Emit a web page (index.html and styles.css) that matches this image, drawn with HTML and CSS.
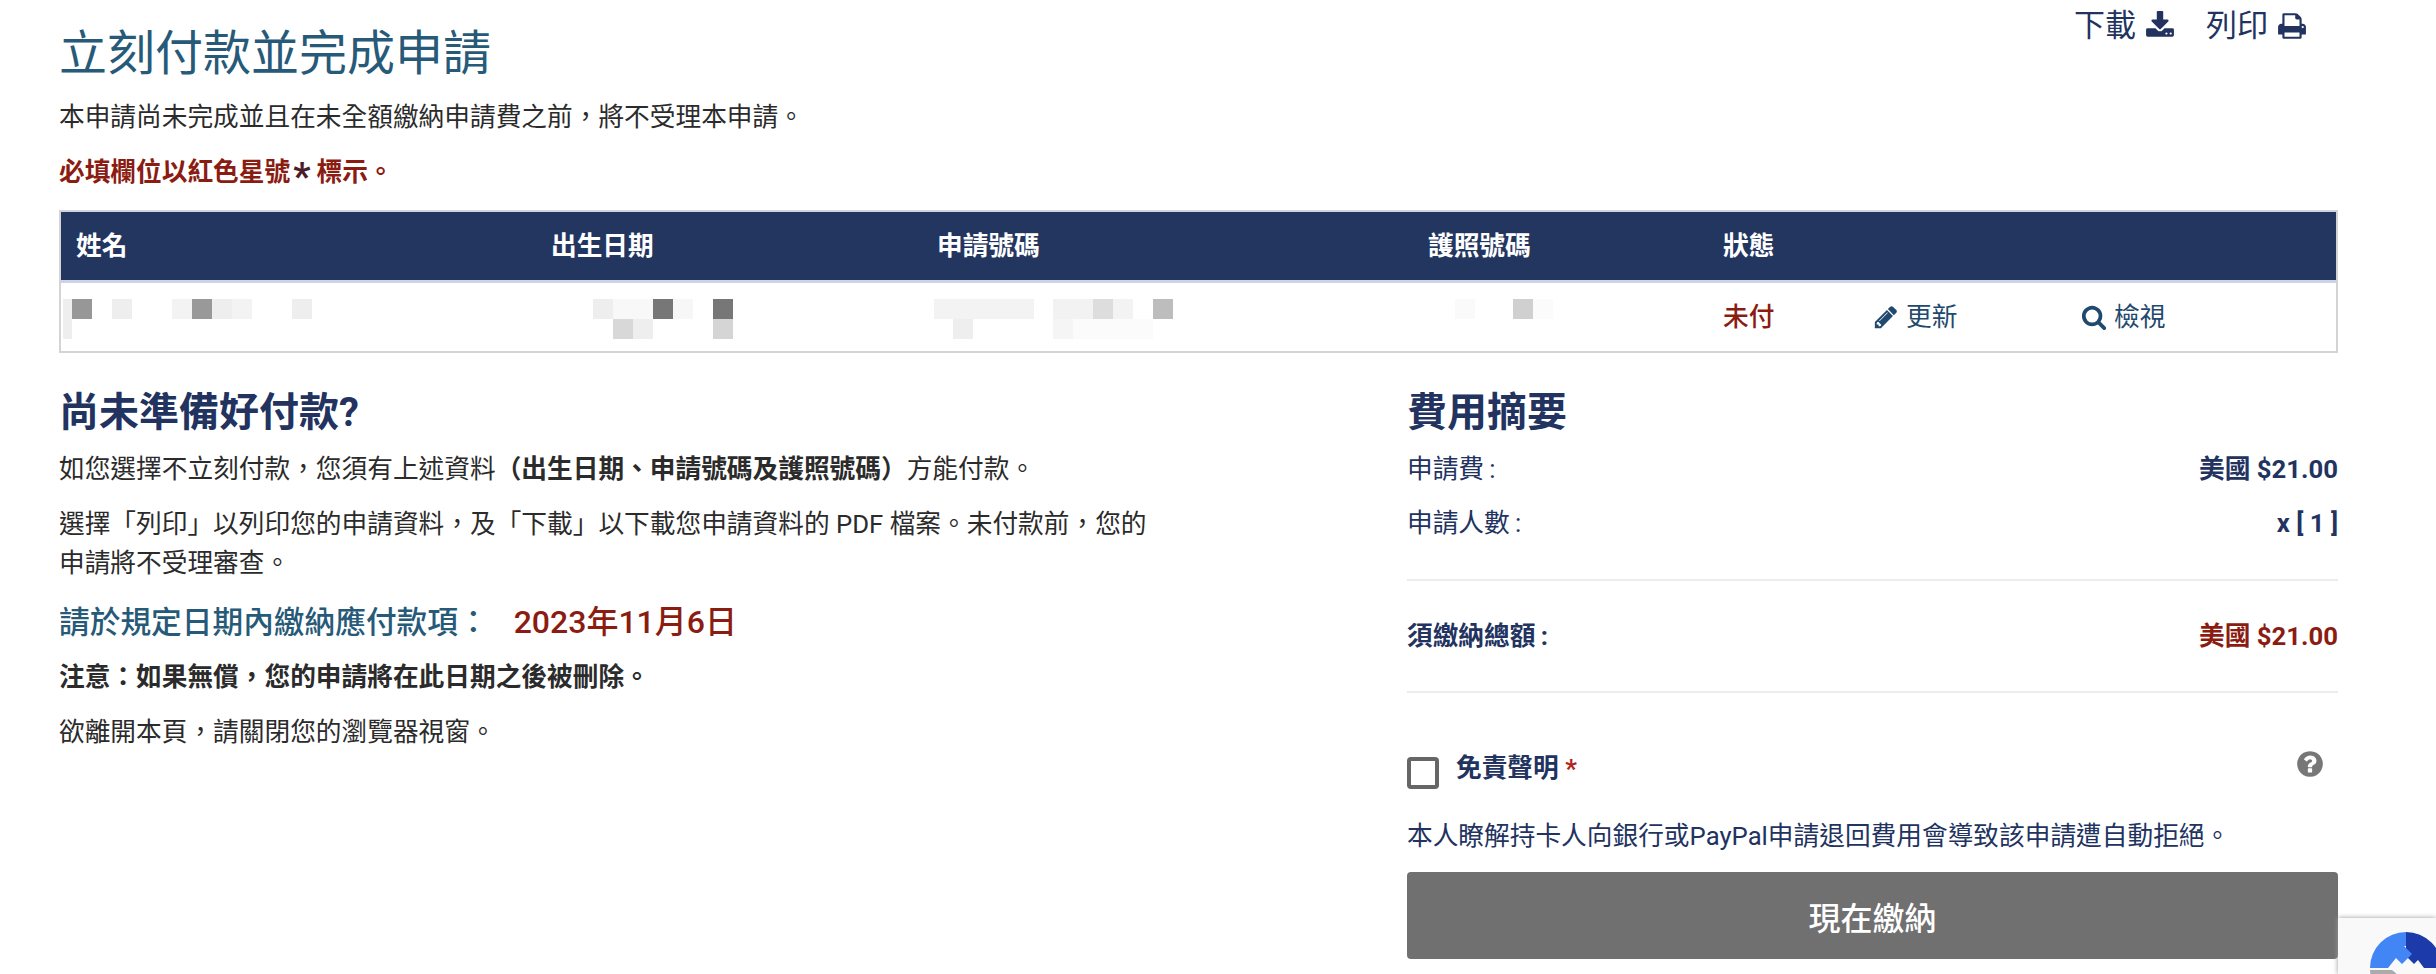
FILE: index.html
```html
<!DOCTYPE html>
<html lang="zh-Hant">
  <head>
    <meta charset="UTF-8" />
    <meta name="viewport" content="width=device-width, initial-scale=1.0" />
    <title>立刻付款並完成申請</title>
    <link rel="stylesheet" href="styles.css">
  </head>
  <body>
    <div class="page">
      <div class="top-row">
        <h1 class="page-title">立刻付款並完成申請</h1>
        <div class="top-actions">
          <a class="top-link">下載
            <svg class="top-icon" viewBox="0 0 1792 1792"><path d="M1344 1344q0-26-19-45t-45-19-45 19-19 45 19 45 45 19 45-19 19-45zm256 0q0-26-19-45t-45-19-45 19-19 45 19 45 45 19 45-19 19-45zm128-224v320q0 40-28 68t-68 28h-1472q-40 0-68-28t-28-68v-320q0-40 28-68t68-28h465l135 136q58 56 136 56t136-56l136-136h464q40 0 68 28t28 68zm-325-569q17 41-14 70l-448 448q-18 19-45 19t-45-19l-448-448q-31-29-14-70 17-39 59-39h256v-448q0-26 19-45t45-19h256q26 0 45 19t19 45v448h256q42 0 59 39z"/></svg>
          </a>
          <a class="top-link">列印
            <svg class="top-icon" viewBox="0 0 1792 1792"><path d="M448 1536h896v-256h-896v256zm0-640h896v-384h-160q-40 0-68-28t-28-68v-160h-640v640zm1152 64q0-26-19-45t-45-19-45 19-19 45 19 45 45 19 45-19 19-45zm128 0v416q0 13-9.5 22.5t-22.5 9.5h-224v160q0 40-28 68t-68 28h-960q-40 0-68-28t-28-68v-160h-224q-13 0-22.5-9.5t-9.5-22.5v-416q0-79 56.5-135.5t135.5-56.5h64v-544q0-40 28-68t68-28h672q40 0 88 20t76 48l152 152q28 28 48 76t20 88v256h64q79 0 135.5 56.5t56.5 135.5z"/></svg>
          </a>
        </div>
      </div>
      <p class="intro">本申請尚未完成並且在未全額繳納申請費之前&#xFF0C;將不受理本申請。</p>
      <p class="required-note">必填欄位以紅色星號<span class="note-star">*</span>標示。</p>

      <div class="app-table">
        <div class="app-row app-head">
          <div class="cell">姓名</div>
          <div class="cell">出生日期</div>
          <div class="cell">申請號碼</div>
          <div class="cell">護照號碼</div>
          <div class="cell">狀態</div>
          <div class="cell"></div>
          <div class="cell"></div>
        </div>
        <div class="app-row app-body">
          <div class="cell cell-blur"><div class="mosaic mosaic-name"></div></div>
          <div class="cell cell-blur"><div class="mosaic mosaic-dob"></div></div>
          <div class="cell cell-blur"><div class="mosaic mosaic-app"></div></div>
          <div class="cell cell-blur"><div class="mosaic mosaic-passport"></div></div>
          <div class="cell status-unpaid">未付</div>
          <div class="cell">
            <a class="row-link">
              <svg class="row-icon" viewBox="0 0 1792 1792"><path d="M491 1536l91-91-235-235-91 91v107h128v128h107zm523-928q0-22-22-22-10 0-17 7l-542 542q-7 7-7 17 0 22 22 22 10 0 17-7l542-542q7-7 7-17zm-54-192l416 416-832 832h-416v-416zm683 96q0 53-37 90l-166 166-416-416 166-165q36-38 90-38 53 0 91 38l235 234q37 39 37 91z"/></svg>
              更新
            </a>
          </div>
          <div class="cell">
            <a class="row-link">
              <svg class="row-icon" viewBox="0 0 1792 1792"><path d="M1216 832q0-185-131.5-316.5t-316.5-131.5-316.5 131.5-131.5 316.5 131.5 316.5 316.5 131.5 316.5-131.5 131.5-316.5zm512 832q0 52-38 90t-90 38q-54 0-90-38l-343-342q-179 124-399 124-143 0-273.5-55.5t-225-150-150-225-55.5-273.5 55.5-273.5 150-225 225-150 273.5-55.5 273.5 55.5 225 150 150 225 55.5 273.5q0 220-124 399l343 343q37 37 37 90z"/></svg>
              檢視
            </a>
          </div>
        </div>
      </div>

      <div class="columns">
        <div class="left-col">
          <h2 class="section-title">尚未準備好付款?</h2>
          <p class="copy">如您選擇不立刻付款&#xFF0C;您須有上述資料<b>&#xFF08;出生日期、申請號碼及護照號碼&#xFF09;</b>方能付款。</p>
          <p class="copy">選擇「列印」以列印您的申請資料&#xFF0C;及「下載」以下載您申請資料的 PDF 檔案。未付款前&#xFF0C;您的申請將不受理審查。</p>
          <h3 class="due-title">請於規定日期內繳納應付款項&#xFF1A;<span class="due-date">2023年11月6日</span></h3>
          <p class="copy"><b>注意&#xFF1A;如果無償&#xFF0C;您的申請將在此日期之後被刪除。</b></p>
          <p class="copy">欲離開本頁&#xFF0C;請關閉您的瀏覽器視窗。</p>
        </div>

        <div class="right-col">
          <h2 class="section-title">費用摘要</h2>
          <div class="fee-row">
            <span class="fee-label">申請費&thinsp;:</span>
            <span class="fee-value">美國 $21.00</span>
          </div>
          <div class="fee-row">
            <span class="fee-label">申請人數&thinsp;:</span>
            <span class="fee-value">x [ 1 ]</span>
          </div>
          <div class="fee-total">
            <span class="total-label">須繳納總額&thinsp;:</span>
            <span class="total-value">美國 $21.00</span>
          </div>
          <div class="disclaimer">
            <span class="checkbox"></span>
            <span class="disclaimer-label">免責聲明 <span class="star">*</span></span>
            <svg class="help-icon" viewBox="0 0 1792 1792"><path d="M1024 1376v-192q0-14-9-23t-23-9h-192q-14 0-23 9t-9 23v192q0 14 9 23t23 9h192q14 0 23-9t9-23zm256-672q0-88-55.5-163t-138.5-116-170-41q-243 0-371 213-15 24 8 42l132 100q7 6 19 6 16 0 25-12 53-68 86-92 34-24 86-24 48 0 85.5 26t37.5 59q0 38-20 61t-68 45q-63 28-115.5 86.5t-52.5 125.5v36q0 14 9 23t23 9h192q14 0 23-9t9-23q0-19 21.5-49.5t54.5-49.5q32-18 49-28.5t46-35 44.5-48 28-60.5 12.5-81zm384 192q0 209-103 385.5t-279.5 279.5-385.5 103-385.5-103-279.5-279.5-103-385.5 103-385.5 279.5-279.5 385.5-103 385.5 103 279.5 279.5 103 385.5z"/></svg>
          </div>
          <p class="disclaimer-text">本人瞭解持卡人向銀行或PayPal申請退回費用會導致該申請遭自動拒絕。</p>
          <button class="pay-btn">現在繳納</button>
        </div>
      </div>
    </div>

    <div class="recaptcha-badge">
      <svg class="recaptcha-logo" viewBox="0 0 72 72">
        <path class="logo-dark" d="M36 0a36 36 0 0 1 36 36H54l-6-8-4 4-8-8z"/>
        <path class="logo-light" d="M36 0v14h-2l8 8-10 10-6-6-8 10H0A36 36 0 0 1 36 0z"/>
        <path class="logo-gray" d="M0 38h22l12 10-8 14h8v10A36 36 0 0 1 0 38z"/>
      </svg>
    </div>
  </body>
</html>
```

FILE: styles.css
```css
body {
  margin: 0;
  background-color: #fff;
  color: #2b2b2b;
  font-family: Roboto, "Noto Sans CJK SC", sans-serif;
  font-size: 25.7px;
  line-height: 39px;
  overflow: hidden;
}
.page {
  width: 2279px;
  margin-left: 59px;
}
.top-row {
  display: flex;
  justify-content: space-between;
  align-items: flex-start;
}
.page-title {
  margin: 24px 0 0;
  color: #275a78;
  font-size: 48px;
  font-weight: 400;
  line-height: 60px;
}
.top-actions {
  display: flex;
  gap: 31px;
  padding-right: 31px;
}
.top-link {
  display: flex;
  align-items: center;
  gap: 9px;
  color: #22335f;
  font-size: 31px;
  line-height: 52px;
}
.top-icon {
  width: 30px;
  height: 30px;
  fill: #22335f;
}
.intro {
  margin: 14px 0 0;
}
.required-note {
  margin: 16px 0 0;
  color: #8b1c12;
  font-weight: 700;
}
.note-star {
  margin: 0 6px 0 3px;
  color: #4a1d2a;
  font-size: 38px;
  line-height: 0;
  vertical-align: -9px;
}
.app-table {
  margin-top: 18px;
  border: 2px solid #d4d4d4;
  border-top-color: #cfd3e2;
}
.app-row {
  display: grid;
  grid-template-columns: 475px 386px 491px 295px 152px 208px 1fr;
}
.app-head {
  height: 68px;
  align-items: center;
  background-color: #233660;
  border-bottom: 3px solid #cfd3e8;
  color: #fff;
  font-weight: 700;
}
.app-body {
  height: 68px;
  align-items: center;
}
.cell {
  padding-left: 15px;
}
.cell-blur {
  padding-left: 0;
  align-self: start;
  padding-top: 16px;
}
.mosaic {
  height: 40px;
  background-repeat: no-repeat;
}
.mosaic-name {
  width: 260px;
  margin-left: 2px;
  background-image:
    linear-gradient(#eeeeee, #eeeeee),
    linear-gradient(#979797, #979797),
    linear-gradient(#eeeeee, #eeeeee),
    linear-gradient(#f3f3f3, #f3f3f3),
    linear-gradient(#999999, #999999),
    linear-gradient(#eeeeee, #eeeeee),
    linear-gradient(#f3f3f3, #f3f3f3),
    linear-gradient(#eeeeee, #eeeeee);
  background-size:
    9px 40px, 20px 20px, 20px 20px, 20px 20px, 20px 20px, 20px 20px, 20px 20px, 20px 20px;
  background-position:
    0 0, 9px 0, 49px 0, 109px 0, 129px 0, 149px 0, 169px 0, 229px 0;
}
.mosaic-dob {
  width: 220px;
  background-image:
    linear-gradient(#eeeeee, #eeeeee),
    linear-gradient(#f8f8f8, #f8f8f8),
    linear-gradient(#777777, #777777),
    linear-gradient(#f7f7f7, #f7f7f7),
    linear-gradient(#777777, #777777),
    linear-gradient(#d8d8d8, #d8d8d8),
    linear-gradient(#eeeeee, #eeeeee),
    linear-gradient(#d5d5d5, #d5d5d5);
  background-size:
    20px 20px, 40px 20px, 20px 20px, 20px 20px, 20px 20px, 20px 20px, 20px 20px, 20px 20px;
  background-position:
    57px 0, 77px 0, 117px 0, 137px 0, 177px 0, 77px 20px, 97px 20px, 177px 20px;
}
.mosaic-app {
  width: 260px;
  margin-left: 12px;
  background-image:
    linear-gradient(#f3f3f3, #f3f3f3),
    linear-gradient(#f2f2f2, #f2f2f2),
    linear-gradient(#dddddd, #dddddd),
    linear-gradient(#f3f3f3, #f3f3f3),
    linear-gradient(#bdbdbd, #bdbdbd),
    linear-gradient(#eeeeee, #eeeeee),
    linear-gradient(#f5f5f5, #f5f5f5),
    linear-gradient(#fbfbfb, #fbfbfb);
  background-size:
    100px 20px, 40px 20px, 20px 20px, 20px 20px, 20px 20px, 20px 20px, 20px 20px, 80px 20px;
  background-position:
    0 0, 119px 0, 159px 0, 179px 0, 219px 0, 19px 20px, 119px 20px, 139px 20px;
}
.mosaic-passport {
  width: 140px;
  margin-left: 42px;
  background-image:
    linear-gradient(#fafafa, #fafafa),
    linear-gradient(#d0d0d0, #d0d0d0),
    linear-gradient(#fbfbfb, #fbfbfb);
  background-size: 20px 20px, 20px 20px, 20px 20px;
  background-position: 0 0, 58px 0, 78px 0;
}
.status-unpaid {
  color: #8b1c12;
  font-weight: 500;
}
.row-link {
  display: flex;
  align-items: center;
  gap: 7px;
  margin-left: -2px;
  color: #1f4a6e;
}
.row-icon {
  width: 26px;
  height: 26px;
  fill: #1f4a6e;
}
.columns {
  display: flex;
  margin-top: 32px;
}
.left-col {
  width: 1100px;
  margin-right: 248px;
}
.right-col {
  width: 931px;
}
.section-title {
  margin: 0 0 9px;
  color: #22335f;
  font-size: 40px;
  font-weight: 700;
  line-height: 56px;
}
.copy {
  margin: 0 0 16px;
}
.due-title {
  margin: 0 0 13px;
  padding-top: 1px;
  color: #275a78;
  font-size: 30.7px;
  font-weight: 500;
  line-height: 44px;
}
.due-date {
  margin-left: 25px;
  color: #8b1c12;
  font-size: 32px;
}
.fee-row {
  display: flex;
  justify-content: space-between;
  height: 54px;
  color: #22335f;
}
.fee-value {
  font-weight: 700;
}
.fee-total {
  display: flex;
  justify-content: space-between;
  align-items: center;
  height: 110px;
  margin-top: 21px;
  border-top: 2px solid #ececec;
  border-bottom: 2px solid #ececec;
  color: #22335f;
  font-weight: 700;
}
.total-value {
  color: #8b1c12;
}
.disclaimer {
  display: flex;
  align-items: flex-start;
  margin-top: 55px;
  color: #22335f;
  font-weight: 700;
}
.disclaimer-label {
  padding-top: 1px;
}
.checkbox {
  width: 24px;
  height: 24px;
  margin-top: 9px;
  margin-right: 17px;
  border: 4px solid #666;
  border-radius: 4px;
}
.star {
  color: #b3261e;
}
.help-icon {
  width: 30px;
  height: 30px;
  margin-top: 1px;
  margin-left: auto;
  margin-right: 13px;
  fill: #777;
}
.disclaimer-text {
  margin: 28px 0 0;
  color: #22335f;
}
.pay-btn {
  display: block;
  width: 100%;
  height: 87px;
  margin-top: 16px;
  border: 0;
  border-radius: 4px;
  background-color: #707070;
  color: #fff;
  font-family: inherit;
  font-size: 32px;
  font-weight: 500;
}
.recaptcha-badge {
  position: fixed;
  left: 2338px;
  top: 918px;
  width: 98px;
  height: 56px;
  overflow: hidden;
  background-color: #f9f9f9;
  box-shadow: 0 0 5px #999;
}
.recaptcha-logo {
  position: absolute;
  left: 32px;
  top: 14px;
  width: 72px;
  height: 72px;
}
.logo-dark {
  fill: #1c3aa9;
}
.logo-light {
  fill: #4285f4;
}
.logo-gray {
  fill: #ababab;
}
```
